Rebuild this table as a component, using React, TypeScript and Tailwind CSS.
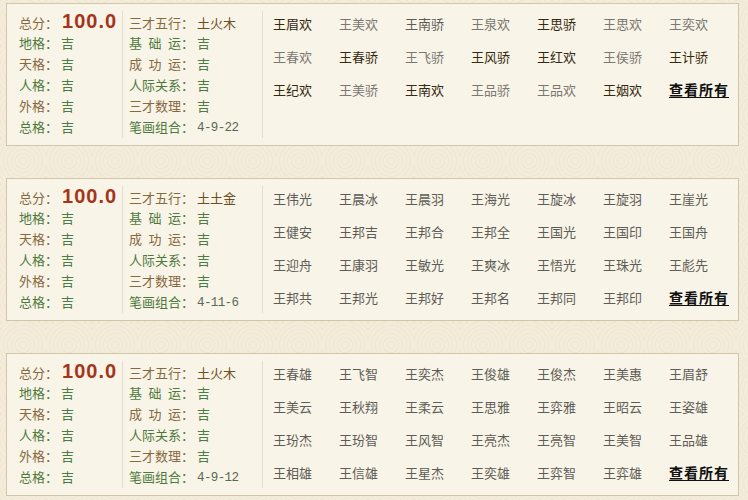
import React from "react";

type Name = { t: string; c?: "d" | "l" | "m" };

const P1: Name[][] = [
  [{ t: "王眉欢", c: "d" }, { t: "王美欢", c: "l" }, { t: "王南骄", c: "m" }, { t: "王泉欢", c: "l" }, { t: "王思骄", c: "d" }, { t: "王思欢", c: "l" }, { t: "王奕欢", c: "l" }],
  [{ t: "王春欢", c: "l" }, { t: "王春骄", c: "d" }, { t: "王飞骄", c: "l" }, { t: "王风骄", c: "d" }, { t: "王红欢", c: "d" }, { t: "王侯骄", c: "l" }, { t: "王计骄", c: "d" }],
  [{ t: "王纪欢", c: "d" }, { t: "王美骄", c: "l" }, { t: "王南欢", c: "d" }, { t: "王品骄", c: "l" }, { t: "王品欢", c: "l" }, { t: "王姻欢", c: "d" }],
];

const toRows = (rows: string[]): Name[][] =>
  rows.map((r) => r.split(" ").map((t) => ({ t, c: "m" as const })));

const P2 = toRows([
  "王伟光 王晨冰 王晨羽 王海光 王旋冰 王旋羽 王崖光",
  "王健安 王邦吉 王邦合 王邦全 王国光 王国印 王国舟",
  "王迎舟 王康羽 王敏光 王爽冰 王悟光 王珠光 王彪先",
  "王邦共 王邦光 王邦好 王邦名 王邦同 王邦印",
]);

const P3 = toRows([
  "王春雄 王飞智 王奕杰 王俊雄 王俊杰 王美惠 王眉舒",
  "王美云 王秋翔 王柔云 王思雅 王弈雅 王昭云 王姿雄",
  "王玢杰 王玢智 王风智 王亮杰 王亮智 王美智 王品雄",
  "王相雄 王信雄 王星杰 王奕雄 王弈智 王弈雄",
]);

const brown = "text-[#86693d]";
const green = "text-[#4d7a3c]";

function Label({ chars, color }: { chars: string[]; color: string }) {
  return (
    <span className={`flex ${color}`}>
      <span className="flex w-[52px] justify-between">
        {chars.map((c, i) => (
          <span key={i}>{c}</span>
        ))}
      </span>
      <span>：</span>
    </span>
  );
}

function Panel({ wuxing, strokes, names }: { wuxing: string; strokes: string; names: Name[][] }) {
  const leftRows = [
    ["地格：", green],
    ["天格：", brown],
    ["人格：", green],
    ["外格：", brown],
    ["总格：", green],
  ];
  const mid: { chars: string[]; color: string; value: React.ReactNode }[] = [
    { chars: ["三", "才", "五", "行"], color: brown, value: <span className="text-[#6b4f22]">{wuxing}</span> },
    { chars: ["基", "础", "运"], color: green, value: <span className="text-[#4c7b44]">吉</span> },
    { chars: ["成", "功", "运"], color: brown, value: <span className="text-[#4c7b44]">吉</span> },
    { chars: ["人", "际", "关", "系"], color: green, value: <span className="text-[#4c7b44]">吉</span> },
    { chars: ["三", "才", "数", "理"], color: brown, value: <span className="text-[#4c7b44]">吉</span> },
    {
      chars: ["笔", "画", "组", "合"],
      color: green,
      value: <span className="font-['Liberation_Mono',monospace] text-[12.5px] tracking-[-0.6px] text-[#566b52]">{strokes}</span>,
    },
  ];
  return (
    <div className="flex h-[143px] w-[733px] border border-[#d2c5a8] bg-[#f9f4e8] text-[13px]">
      <div className="flex w-[115px] flex-col pl-[12px] pt-[9px]">
        <div className="flex h-[19px] items-center">
          <span className={brown}>总分：</span>
          <span className="mb-[4px] ml-[4px] font-['Liberation_Sans',Arial,sans-serif] text-[20px] leading-none font-bold tracking-[1px] text-[#a4341a]">
            100.0
          </span>
        </div>
        {leftRows.map(([l, c], i) => (
          <div key={i} className="flex h-[21px] items-center">
            <span className={c}>{l}</span>
            <span className="ml-[3px] text-[#4c7b44]">吉</span>
          </div>
        ))}
      </div>
      <div className="my-[7px] w-px bg-[#e6dcc8]" />
      <div className="flex w-[139px] flex-col pl-[6px] pt-[9px]">
        {mid.map((m, i) => (
          <div key={i} className={`flex items-center ${i === 0 ? "h-[19px]" : "h-[21px]"}`}>
            <Label chars={m.chars} color={m.color} />
            <span className="ml-[3px]">{m.value}</span>
          </div>
        ))}
      </div>
      <div className="my-[7px] w-px bg-[#e6dcc8]" />
      <div className="pl-[10px] pt-[3px]">
        <div className="grid grid-cols-[repeat(7,66px)]">
          {names.map((row, ri) => (
            <React.Fragment key={ri}>
              {row.map((n, ci) => (
                <div
                  key={ci}
                  className={`flex h-[33px] items-center ${
                    n.c === "d" ? "text-[#35290f]" : n.c === "l" ? "text-[#7a7873]" : "text-[#5e5c57]"
                  }`}
                >
                  {n.t}
                </div>
              ))}
              {ri === names.length - 1 && (
                <div className="flex h-[33px] items-center">
                  <span className="text-[14px] font-bold tracking-[1px] text-[#111] underline underline-offset-2">查看所有</span>
                </div>
              )}
            </React.Fragment>
          ))}
        </div>
      </div>
    </div>
  );
}

export default function App() {
  return (
    <div className="flex h-[500px] w-[748px] flex-col gap-[32px] overflow-hidden bg-[#f4ecdb] bg-[repeating-radial-gradient(circle_at_50%_50%,#f4ecdb_0px,#f4ecdb_3px,#f0e6d1_3px,#f0e6d1_4px)] bg-size-[46px_46px] pl-[6px] pt-[3px] font-['Noto_Sans_CJK_SC','Noto_Sans',sans-serif]">
      <Panel wuxing="土火木" strokes="4-9-22" names={P1} />
      <Panel wuxing="土土金" strokes="4-11-6" names={P2} />
      <Panel wuxing="土火木" strokes="4-9-12" names={P3} />
    </div>
  );
}
